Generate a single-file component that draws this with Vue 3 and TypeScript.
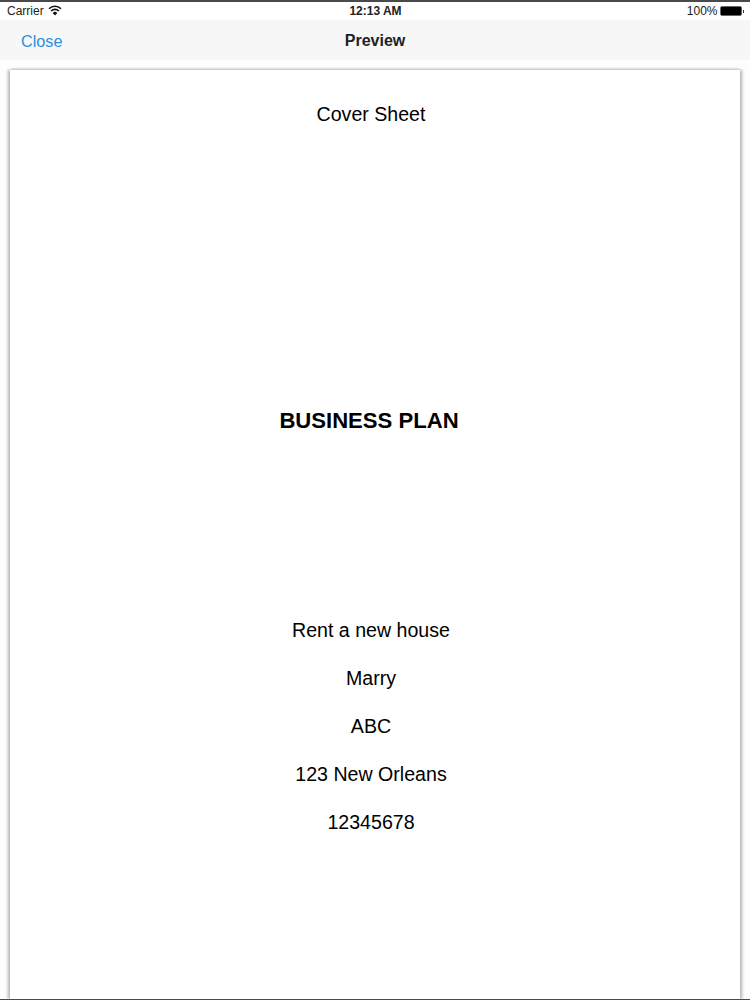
<script setup lang="ts">
const lines: string[] = ['Rent a new house', 'Marry', 'ABC', '123 New Orleans', '12345678']
</script>

<template>
  <div class="screen">
    <div class="status">
      <div class="status-left">
        <span>Carrier</span>
        <svg class="wifi" width="14" height="11" viewBox="0 0 14 11">
          <path d="M7 10.4 L4.7 7.9 A3.4 3.4 0 0 1 9.3 7.9 Z" fill="#111" />
          <path d="M3.1 6 A5.6 5.6 0 0 1 10.9 6" fill="none" stroke="#111" stroke-width="1.6" />
          <path d="M1 3.7 A8.6 8.6 0 0 1 13 3.7" fill="none" stroke="#111" stroke-width="1.6" />
        </svg>
      </div>
      <span class="time">12:13 AM</span>
      <div class="status-right">
        <span>100%</span>
        <span class="battery"><span class="battery-fill"></span></span>
        <span class="battery-tip"></span>
      </div>
    </div>
    <div class="navbar">
      <span class="close">Close</span>
      <span class="title">Preview</span>
    </div>
    <div class="stage">
      <div class="page">
        <div class="cover">Cover Sheet</div>
        <div class="plan">BUSINESS PLAN</div>
        <div class="details">
          <div v-for="line in lines" :key="line" class="detail">{{ line }}</div>
        </div>
      </div>
    </div>
  </div>
</template>

<style>
html, body { margin: 0; background: #fff; }
</style>

<style scoped>
.screen {
  width: 750px;
  height: 1000px;
  display: flex;
  flex-direction: column;
  overflow: hidden;
  background: #fff;
  font-family: "Liberation Sans", Arial, sans-serif;
  color: #000;
  border-top: 2px solid #4a4a4a;
  border-bottom: 1px solid #4a4a4a;
  box-sizing: border-box;
}
.status {
  height: 18px;
  flex: none;
  position: relative;
  display: flex;
  align-items: center;
  justify-content: space-between;
  padding: 0 6px 0 7px;
  font-size: 12px;
  color: #222;
  background: #fff;
}
.status-left { display: flex; align-items: center; gap: 4px; }
.wifi { display: block; margin-top: -2px; }
.time {
  position: absolute;
  left: 1px;
  right: 0;
  text-align: center;
  font-weight: 700;
  font-size: 12px;
  pointer-events: none;
}
.status-right { display: flex; align-items: center; }
.battery {
  margin-left: 2px;
  width: 22px;
  height: 10px;
  box-sizing: border-box;
  border: 1px solid #666;
  border-radius: 2px;
  display: block;
}
.battery-fill { display: block; width: 100%; height: 100%; background: #000; }
.battery-tip {
  width: 1.5px;
  height: 3px;
  background: #333;
  margin-left: 1px;
}
.navbar {
  height: 40px;
  box-sizing: border-box;
  padding-top: 2px;
  flex: none;
  background: #f7f7f8;
  display: flex;
  align-items: center;
  justify-content: center;
  position: relative;
}
.close {
  position: absolute;
  left: 21px;
  font-size: 16.2px;
  color: #2b8fe0;
}
.title { font-size: 16px; font-weight: 700; color: #222; }
.stage {
  flex: 1;
  min-height: 0;
  padding: 10px 10px 0 10px;
  background: #fdfdfd;
}
.page {
  height: 100%;
  box-sizing: border-box;
  display: flex;
  flex-direction: column;
  align-items: center;
  background: #fff;
  box-shadow: -2px 0 3px 0 #b4b4ba, 2px 0 3px 0 #b4b4ba, 0 -1px 2px 0 #f0f0f2;
  padding-top: 32px;
  padding-right: 8px;
  font-size: 19.6px;
  line-height: 24px;
}
.plan {
  margin-top: 281px;
  font-size: 22.1px;
  line-height: 28px;
  font-weight: 700;
  margin-left: -4px;
}
.details {
  margin-top: 183px;
  display: flex;
  flex-direction: column;
  align-items: center;
  gap: 24px;
}
</style>
